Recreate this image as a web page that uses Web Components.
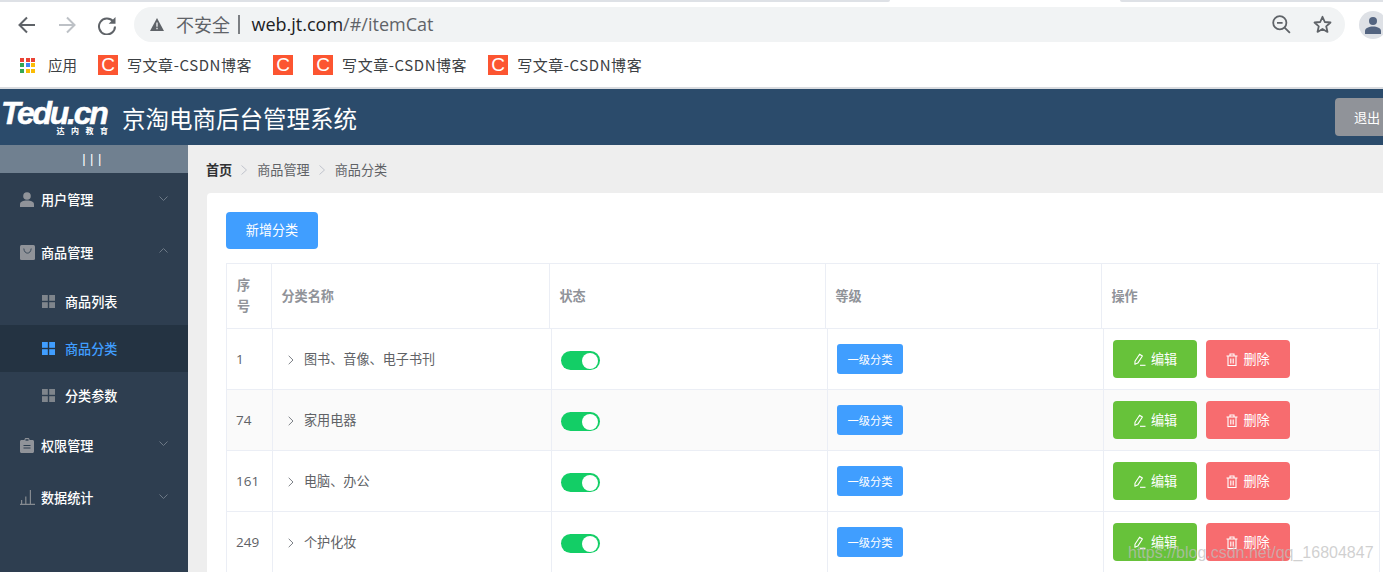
<!DOCTYPE html>
<html lang="zh-CN"><head><meta charset="utf-8"><title>itemCat</title>
<style>
html,body{margin:0;height:572px;width:1383px;overflow:hidden;background:#fff;font-family:"Noto Sans CJK SC","Noto Sans",sans-serif}
</style></head><body>
<app-shell></app-shell>
<script>
const CJK='"Noto Sans CJK SC","Noto Sans",sans-serif';
function def(name,css,html){
  customElements.define(name,class extends HTMLElement{
    constructor(){super();const s=this.attachShadow({mode:'open'});
      const h=typeof html==='function'?html(this):html;
      s.innerHTML='<style>'+css+'</style>'+h;}
    connectedCallback(){
      if(typeof html==='function'&&!this._d){this._d=1;const h=html(this);this.shadowRoot.innerHTML='<style>'+css+'</style>'+h;}
    }
  });
}
const ic={
 user:'<svg viewBox="0 0 14 15" width="14" height="15"><circle cx="7" cy="4" r="3.8" fill="#909399"/><path d="M0 15v-2.6C0 9.8 3 8.6 7 8.6s7 1.2 7 3.8V15z" fill="#909399"/></svg>',
 goods:'<svg viewBox="0 0 15 15" width="15" height="15"><rect width="15" height="15" rx="1.5" fill="#909399"/><path d="M3.8 3.5c.4 3.4 2 4.6 3.7 4.6s3.300-1.200 3.700-4.600" fill="none" stroke="#3a4a5a" stroke-width="1"/></svg>',
 order:'<svg viewBox="0 0 14 15" width="14" height="15"><path d="M1.500 2H4.500V1.500C4.500.6 5.200 0 6 0h2c.8 0 1.500.6 1.500 1.500V2h3c.8 0 1.500.7 1.500 1.500v10c0 .8-.7 1.500-1.500 1.500h-11C.7 15 0 14.300 0 13.500v-10C0 2.700.7 2 1.500 2z" fill="#909399"/><path d="M3.500 7.500h7M3.500 10h7" stroke="#2e3f50" stroke-width="1.100"/><rect x="5.500" y="1.200" width="3" height="1.500" fill="#2e3f50"/></svg>',
 data:'<svg viewBox="0 0 15 15" width="15" height="15" fill="none" stroke="#858a90" stroke-width="1.200"><path d="M0 14.400h15M1.600 14.400V10M5.800 14.400V6.500M10.400 14.400V0M14 14.400V14"/></svg>',
 grid:c=>`<svg viewBox="0 0 13 13" width="13" height="13" fill="${c}"><rect width="5.800" height="5.800"/><rect x="7.200" width="5.800" height="5.800"/><rect y="7.200" width="5.800" height="5.800"/><rect x="7.200" y="7.200" width="5.800" height="5.800"/></svg>`,
 down:'<svg viewBox="0 0 9 5" width="9" height="5" fill="none" stroke="#6d7986" stroke-width="1"><path d="M.5.500l4 4 4-4"/></svg>',
 up:'<svg viewBox="0 0 9 5" width="9" height="5" fill="none" stroke="#6d7986" stroke-width="1"><path d="M.5 4.500l4-4 4 4"/></svg>'
};

def('bookmark-item',`:host{display:flex;align-items:center;gap:9px;font:15px ${CJK};letter-spacing:.56px;color:#3c4043;white-space:nowrap}
slot{display:block;padding-bottom:2px}
.c{width:20px;height:20px;background:#fc5531;color:#fff;font:19px/20px "Liberation Sans",sans-serif;letter-spacing:0;text-align:center;display:block}`,
 `<span class="c">C</span><slot></slot>`);

def('browser-chrome',`:host{display:flex;flex-direction:column;height:89px;flex:none;background:#fff;overflow:hidden}
.strip{display:flex;height:2px;flex:none}
.strip i{display:block;background:#dee1e6}
.strip .a{width:890px;border-bottom-right-radius:3px}.strip .b{flex:1;background:#fff}.strip .c{width:263px;border-bottom-left-radius:3px}
.tool{display:flex;align-items:center;height:45px;flex:none;padding-left:17px}
.nav{display:flex;gap:20px}.nav svg{display:block}
.bar{flex:1;margin-left:17px;height:35px;border-radius:18px;background:#f1f3f4;display:flex;align-items:center;padding:0 13px 0 16px;box-sizing:border-box;min-width:0}
.tri{flex:none;display:block}
.ns{font:18px/35px ${CJK};color:#5f6368;margin-left:12px;white-space:nowrap}
.sep{width:1.500px;height:19px;background:#7c7f83;margin:0 12px 0 8px;flex:none}
.url{font:18px/35px "Open Sans",sans-serif;color:#5f6368;white-space:nowrap}.url b{font-weight:400;color:#202124}
.r{margin-left:auto;display:flex;gap:22px;align-items:center}
.av{flex:none;width:28px;height:28px;border-radius:50%;background:#dee1e6;margin:0 -4px 0 14px;display:flex;align-items:center;justify-content:center}
.marks{flex:1;display:flex;align-items:center;gap:21px;padding:0 0 4px 20px;min-height:0}
.apps{display:flex;align-items:center;gap:13px;font:14.500px ${CJK};color:#3c4043}
.apps span.t{padding-bottom:2px}
.dots{display:grid;grid-template-columns:repeat(3,4px);grid-auto-rows:4px;gap:1.500px}
.dots i{display:block}
.line{height:2px;background:#dadce0;flex:none}
.pair{margin-right:-10px}`,
`<div class="strip"><i class="a"></i><i class="b"></i><i class="c"></i></div>
<div class="tool"><div class="nav">
<svg width="20" height="20" viewBox="0 0 20 20" fill="none" stroke="#5f6368" stroke-width="2"><path d="M18 10H3M10 2.500L2.500 10l7.500 7.500"/></svg>
<svg width="20" height="20" viewBox="0 0 20 20" fill="none" stroke="#bdc1c6" stroke-width="2"><path d="M2 10h15M10 2.500l7.500 7.500-7.500 7.500"/></svg>
<svg width="20" height="20" viewBox="0 0 20 20"><path d="M16.200 6.400A8 8 0 1 0 18 11.500" fill="none" stroke="#5f6368" stroke-width="2"/><path d="M18.500 2v6.800h-6.800z" fill="#5f6368"/></svg>
</div>
<div class="bar">
<svg class="tri" width="14" height="13" viewBox="0 0 14 13"><path d="M7 0l7 13H0z" fill="#5f6368"/><path d="M7 4.500v4.200M7 9.800v1.400" stroke="#f1f3f4" stroke-width="1.300"/></svg>
<span class="ns">不安全</span><span class="sep"></span><span class="url"><b>web.jt.com</b>/#/itemCat</span>
<div class="r">
<svg width="19" height="19" viewBox="0 0 19 19" fill="none" stroke="#5f6368" stroke-width="1.800"><circle cx="7.800" cy="7.800" r="6.600"/><path d="M12.600 12.600l5.300 5.300M5 7.800h5.600"/></svg>
<svg width="19" height="19" viewBox="0 0 19 19" fill="none" stroke="#5f6368" stroke-width="1.800" stroke-linejoin="round"><path d="M9.500 1.800l2.300 5.200 5.700.5-4.300 3.800 1.300 5.600-5-3-5 3 1.300-5.600L1.500 7.500l5.700-.5z"/></svg>
</div></div>
<div class="av"><svg width="18" height="18" viewBox="0 0 18 18" fill="#536480"><circle cx="9" cy="5" r="4"/><path d="M1 18v-3c0-3 4-4.500 8-4.500s8 1.500 8 4.500v3z"/></svg></div>
</div>
<div class="marks">
<span class="apps"><span class="dots">
<i style="background:#ea4335"></i><i style="background:#ea4335"></i><i style="background:#ea4335"></i>
<i style="background:#34a853"></i><i style="background:#4285f4"></i><i style="background:#fbbc05"></i>
<i style="background:#34a853"></i><i style="background:#fbbc05"></i><i style="background:#fbbc05"></i></span><span class="t">应用</span></span>
<bookmark-item>写文章-CSDN博客</bookmark-item>
<bookmark-item class="pair"></bookmark-item>
<bookmark-item>写文章-CSDN博客</bookmark-item>
<bookmark-item>写文章-CSDN博客</bookmark-item>
</div>
<div class="line"></div>`);

def('app-header',`:host{display:flex;align-items:center;height:56px;flex:none;background:#2b4b6b;color:#fff}
.logo{width:108px;margin-left:1px;margin-top:2px;flex:none;display:flex;flex-direction:column;align-items:flex-end}
.en{font:italic 700 32px/25px "Liberation Sans",sans-serif;letter-spacing:-2.300px;white-space:nowrap;align-self:flex-start;-webkit-text-stroke:.5px #fff}
.cn{font:700 8px/9px ${CJK};letter-spacing:6.500px;margin-right:-5.500px;white-space:nowrap}
h1{margin:0 0 0 13px;padding-top:3px;font:400 23.500px/1 ${CJK};white-space:nowrap}
button{margin-left:auto;margin-right:-17px;width:65px;height:38px;border:0;border-radius:4px;background:#909399;color:#fff;font:13.125px ${CJK};padding:0 0 0 19px;text-align:left}`,
`<div class="logo"><span class="en">Tedu.cn</span><span class="cn">达内教育</span></div><h1>京淘电商后台管理系统</h1><button>退出</button>`);

def('menu-item',`:host{display:flex;align-items:center;box-sizing:border-box;height:52.670px;padding:0 20px;color:#fff;font:500 13.125px ${CJK};white-space:nowrap}
:host([sub]){height:47px;padding-left:42px}
:host([active]){background:#243342;color:#409eff}
.i{display:flex;width:21px;flex:none}
:host([sub]) .i{width:23px}
.a{margin-left:auto;display:flex;position:relative;top:-1.500px}
svg{display:block}`,
el=>{
  const n=el.getAttribute('icon'),a=el.getAttribute('arrow');
  const i=n==='grid'?ic.grid(el.hasAttribute('active')?'#409eff':'#7f858c'):(ic[n]||'');
  return `<span class="i">${i}</span><slot></slot>${a?`<span class="a">${ic[a]}</span>`:''}`;
});

def('side-menu',`:host{display:block;width:188px;flex:none;background:#2e3e50}
.t{height:28px;background:#708090;color:#fff;font:13px/28px "Liberation Sans",sans-serif;letter-spacing:4.500px;text-align:center;box-sizing:border-box}`,
`<div class="t">|||</div><slot></slot>`);

def('bread-crumb',`:host{display:flex;align-items:center;height:48px;box-sizing:border-box;padding-top:1px;color:#606266;font:13.125px ${CJK};white-space:nowrap}
b{color:#303133;font-weight:700}
svg{margin:0 10px 0 9px;display:block}
svg:first-of-type{margin-left:9px}`,
`<b>首页</b><svg width="6" height="10" viewBox="0 0 6 10" fill="none" stroke="#c0c4cc"><path d="M.5.500l5 4.500-5 4.500"/></svg><span>商品管理</span><svg width="6" height="10" viewBox="0 0 6 10" fill="none" stroke="#c0c4cc"><path d="M.5.500l5 4.500-5 4.500"/></svg><span>商品分类</span>`);

def('x-btn',`:host{display:inline-flex;align-items:center;justify-content:center;box-sizing:border-box;height:38px;width:84px;border-radius:4px;color:#fff;font:13.125px ${CJK};background:var(--bg,#409eff);white-space:nowrap;gap:5px}
slot{display:block;padding-bottom:2px}
svg{display:block}`,
el=>{
 const n=el.getAttribute('icon');
 const s=n==='edit'?'<svg width="13" height="13" viewBox="0 0 13 13" fill="none" stroke="#fff" stroke-width="1.100" stroke-linejoin="round"><path d="M2 8.300L6.600 1.200l2.800 1.800-4.600 7.100-2.900 1.200z"/><path d="M7 12.300h5.500"/></svg>'
 :n==='del'?'<svg width="12" height="13" viewBox="0 0 12 13" fill="none" stroke="#fff" stroke-width="1.100"><path d="M.5 3h11M4 3V1h4v2M2 3v9.500h8V3M4.800 5.500v5M7.200 5.500v5"/></svg>':'';
 return s+'<slot></slot>';
});

def('x-switch',`:host{display:block;width:38.500px;height:19px;border-radius:10px;background:#13ce66;position:relative;margin-top:3px}
i{position:absolute;right:2px;top:1.500px;width:16px;height:16px;border-radius:50%;background:#fff}`,`<i></i>`);

def('x-tag',`:host{display:inline-flex;align-items:center;justify-content:center;width:66px;height:30px;border-radius:3px;background:#409eff;color:#fff;font:11.250px ${CJK};white-space:nowrap}
slot{display:block;padding-bottom:1px}`,`<slot></slot>`);

def('head-row',`:host{display:grid;grid-template-columns:45px 278px 276px 276px 276px;width:1151px;height:65px;color:#909399;font:700 13.125px/21px ${CJK};border-bottom:1px solid #ebeef5;box-sizing:border-box}
div{display:flex;align-items:center;padding:0 9px 2px 10px;border-right:1px solid #ebeef5;box-sizing:border-box}
div:first-child{padding:1px 9px 0 10px}
div:nth-child(n+3){padding-left:9.500px}
span{display:block}`,
`<div><span>序号</span></div><div><span>分类名称</span></div><div><span>状态</span></div><div><span>等级</span></div><div><span>操作</span></div>`);

def('cat-row',`:host{display:grid;grid-template-columns:46px 279px 276px 276px 276px;width:1153px;height:61px;box-sizing:border-box;border-bottom:1px solid #ebeef5;color:#606266;font:13.125px ${CJK}}
:host([stripe]){background:#fafafa}
.c{display:flex;align-items:center;padding-left:9px;border-right:1px solid #ebeef5;box-sizing:border-box;white-space:nowrap;gap:9px}
.n{padding-left:9px;padding-bottom:1px;font-family:"Open Sans",sans-serif;font-size:13.500px}
.t{padding-left:15px;gap:10px}
.t svg{display:block;flex:none;margin-top:1px}
.t span{padding-bottom:2px}`,
el=>`<div class="c n">${el.getAttribute('num')}</div>
<div class="c t"><svg width="6" height="10" viewBox="0 0 6 10" fill="none" stroke="#7d8187"><path d="M.7.800l4.300 4.200-4.300 4.200"/></svg><span>${el.getAttribute('name')}</span></div>
<div class="c"><x-switch></x-switch></div>
<div class="c"><x-tag>一级分类</x-tag></div>
<div class="c"><x-btn icon="edit" style="--bg:#67c23a">编辑</x-btn><x-btn icon="del" style="--bg:#f76c6f">删除</x-btn></div>`);

def('cat-table',`:host{display:block;margin-top:14px;border-left:1px solid #ebeef5;border-top:1px solid #ebeef5}`,`<slot></slot>`);

def('cat-card',`:host{display:block;width:1192px;margin-left:1px;padding:19px;box-sizing:border-box;background:#fff;border-radius:4px 4px 0 0;height:400px}`,`<slot></slot>`);

def('cat-main',`:host{display:block;flex:1;min-width:0;background:#eee;padding-left:18px;overflow:hidden}`,`<slot></slot>`);

def('app-shell',`:host{display:flex;flex-direction:column;width:1383px;height:572px;overflow:hidden;position:relative}
.body{display:flex;flex:1;min-height:0}
.wm{position:absolute;left:1128px;top:543px;font:16px/20px "Liberation Sans",sans-serif;color:rgba(190,190,190,.72);white-space:nowrap}
x-btn.add{width:92px;height:37px;--bg:#409eff}`,
`<browser-chrome></browser-chrome><app-header></app-header>
<div class="body">
<side-menu>
<menu-item icon="user" arrow="down" style="height:53.700px">用户管理</menu-item>
<menu-item icon="goods" arrow="up" style="height:51.600px">商品管理</menu-item>
<menu-item sub icon="grid">商品列表</menu-item>
<menu-item sub active icon="grid">商品分类</menu-item>
<menu-item sub icon="grid">分类参数</menu-item>
<menu-item icon="order" arrow="down" style="height:52.200px">权限管理</menu-item>
<menu-item icon="data" arrow="down">数据统计</menu-item>
</side-menu>
<cat-main>
<bread-crumb></bread-crumb>
<cat-card>
<x-btn class="add">新增分类</x-btn>
<cat-table>
<head-row></head-row>
<cat-row num="1" name="图书、音像、电子书刊"></cat-row>
<cat-row num="74" name="家用电器" stripe></cat-row>
<cat-row num="161" name="电脑、办公"></cat-row>
<cat-row num="249" name="个护化妆"></cat-row>
</cat-table>
</cat-card>
</cat-main>
</div>
<div class="wm">https://blog.csdn.net/qq_16804847</div>`);
</script>
</body></html>
